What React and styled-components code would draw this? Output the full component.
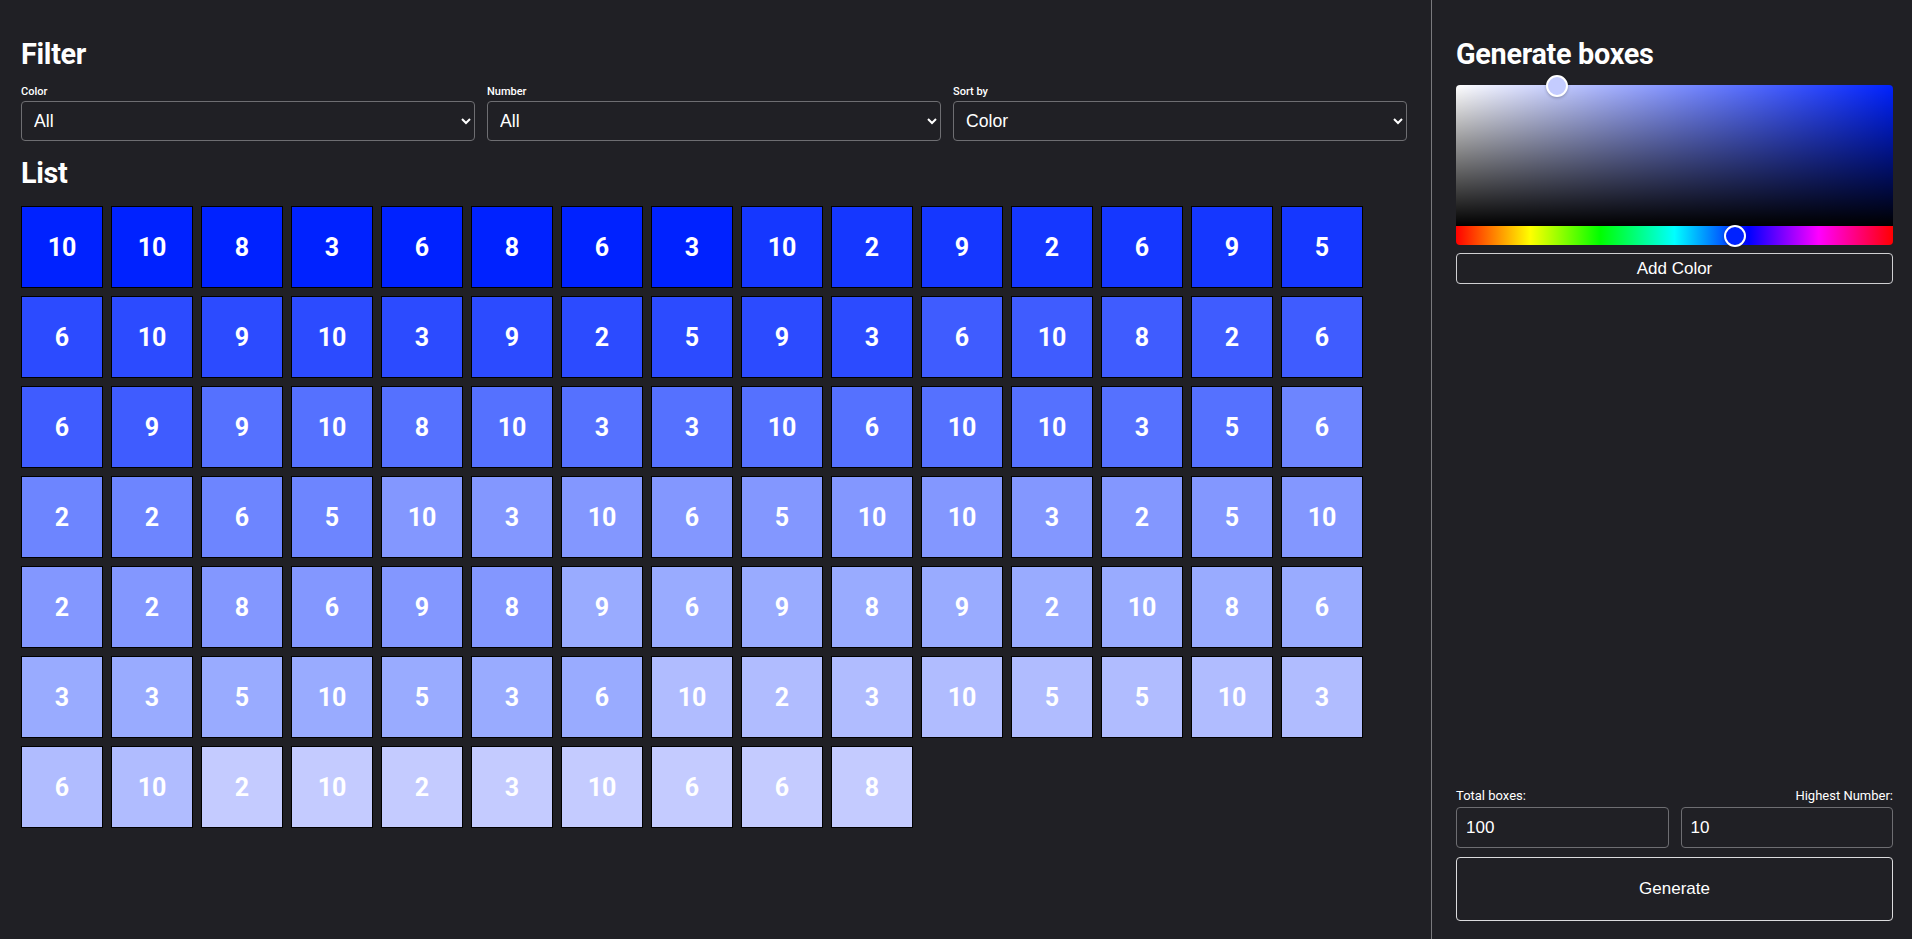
import React, { useState } from 'react';
import styled, { createGlobalStyle } from 'styled-components';

const GlobalStyle = createGlobalStyle`
  html, body {
    margin: 0;
    padding: 0;
    background: #202025;
    color: #ffffff;
    color-scheme: dark;
    font-family: Roboto, "Liberation Sans", Arial, sans-serif;
  }
  * { box-sizing: border-box; }
`;

const Page = styled.div`
  display: flex;
  height: 100vh;
  width: 100%;
  overflow: hidden;
`;

const MainPanel = styled.main`
  flex: 1;
  padding: 37px 24px 0 21px;
  border-right: 1px solid #7a7a7e;
`;

const SidePanel = styled.aside`
  width: 480px;
  flex-shrink: 0;
  display: flex;
  flex-direction: column;
  padding: 37px 19px 18px 24px;
`;

const Heading = styled.h2`
  margin: 0 0 ${p => p.$gap || 14}px;
  font-size: 28.8px;
  line-height: 34px;
  font-weight: 700;
  letter-spacing: -0.3px;
`;

const FilterRow = styled.div`
  display: grid;
  grid-template-columns: repeat(3, 1fr);
  gap: 12px;
  margin-bottom: 15px;
`;

const Field = styled.label`
  display: flex;
  flex-direction: column;
  gap: 3px;
`;

const SmallLabel = styled.span`
  font-size: 11px;
  line-height: 13px;
  font-weight: 500;
`;

const Select = styled.select`
  height: 40px;
  width: 100%;
  padding: 0 6px 0 8px;
  border: 1px solid #6e6e72;
  border-radius: 4px;
  background: #202025;
  color: #ffffff;
  font-family: "Liberation Sans", Arial, sans-serif;
  font-size: 17.6px;
  outline: none;
`;

const Grid = styled.div`
  display: flex;
  flex-wrap: wrap;
  gap: 8px;
  width: 1350px;
`;

const Box = styled.div`
  width: 82px;
  height: 82px;
  border: 1px solid #000;
  background: ${p => p.$color};
  display: flex;
  align-items: center;
  justify-content: center;
  font-size: 25px;
  font-weight: 700;
  color: #fff;
`;

const Picker = styled.div`
  display: flex;
  flex-direction: column;
  margin-bottom: 8px;
`;

const Saturation = styled.div`
  position: relative;
  height: 141px;
  border-radius: 4px 4px 0 0;
  background:
    linear-gradient(to top, #000, rgba(0, 0, 0, 0)),
    linear-gradient(to right, #fff, rgba(255, 255, 255, 0)),
    hsl(${p => p.$hue}, 100%, 50%);
`;

const Hue = styled.div`
  position: relative;
  height: 19px;
  border-radius: 0 0 4px 4px;
  background: linear-gradient(to right, #f00 0%, #ff0 17%, #0f0 33%, #0ff 50%, #00f 67%, #f0f 83%, #f00 100%);
`;

const Pointer = styled.div`
  position: absolute;
  width: 22px;
  height: 22px;
  margin: -11px 0 0 -11px;
  border-radius: 50%;
  border: 2px solid #fff;
  background: ${p => p.$color};
  box-shadow: 0 1px 3px rgba(0, 0, 0, 0.25);
`;

const OutlineButton = styled.button`
  width: 100%;
  height: ${p => p.$height}px;
  border: 1px solid ${p => p.$border || '#cfcfd2'};
  border-radius: 4px;
  background: transparent;
  color: #fff;
  font-family: "Liberation Sans", Arial, sans-serif;
  font-size: 17px;
  cursor: pointer;
`;

const Bottom = styled.div`
  margin-top: auto;
  display: flex;
  flex-direction: column;
`;

const LabelRow = styled.div`
  display: flex;
  justify-content: space-between;
  font-size: 13px;
  line-height: 15px;
  font-weight: 400;
  margin-bottom: 4px;
`;

const InputRow = styled.div`
  display: grid;
  grid-template-columns: 1fr 1fr;
  gap: 12px;
  margin-bottom: 9px;
`;

const NumberInput = styled.input`
  height: 41px;
  width: 100%;
  padding: 0 9px;
  border: 1px solid #6e6e72;
  border-radius: 4px;
  background: transparent;
  color: #fff;
  font-family: "Liberation Sans", Arial, sans-serif;
  font-size: 17px;
  outline: none;
`;

const shades = [
  ['#0022ff', 8], ['#1537ff', 7], ['#2c4bff', 10], ['#3f5cff', 7], ['#5571ff', 12],
  ['#6d85ff', 5], ['#8397ff', 17], ['#99abff', 16], ['#b0bcff', 10], ['#c4cbff', 8],
];

const numbers = [
  10, 10, 8, 3, 6, 8, 6, 3, 10, 2, 9, 2, 6, 9, 5,
  6, 10, 9, 10, 3, 9, 2, 5, 9, 3, 6, 10, 8, 2, 6,
  6, 9, 9, 10, 8, 10, 3, 3, 10, 6, 10, 10, 3, 5, 6,
  2, 2, 6, 5, 10, 3, 10, 6, 5, 10, 10, 3, 2, 5, 10,
  2, 2, 8, 6, 9, 8, 9, 6, 9, 8, 9, 2, 10, 8, 6,
  3, 3, 5, 10, 5, 3, 6, 10, 2, 3, 10, 5, 5, 10, 3,
  6, 10, 2, 10, 2, 3, 10, 6, 6, 8,
];

const colors = shades.flatMap(([c, n]) => Array(n).fill(c));
const initialBoxes = numbers.map((n, i) => ({ number: n, color: colors[i] }));

const App = () => {
  const [boxes] = useState(initialBoxes);
  const [total, setTotal] = useState('100');
  const [highest, setHighest] = useState('10');
  const hue = 232;

  return (
    <Page>
      <GlobalStyle />
      <MainPanel>
        <Heading>Filter</Heading>
        <FilterRow>
          <Field>
            <SmallLabel>Color</SmallLabel>
            <Select defaultValue="all">
              <option value="all">All</option>
            </Select>
          </Field>
          <Field>
            <SmallLabel>Number</SmallLabel>
            <Select defaultValue="all">
              <option value="all">All</option>
            </Select>
          </Field>
          <Field>
            <SmallLabel>Sort by</SmallLabel>
            <Select defaultValue="color">
              <option value="color">Color</option>
              <option value="number">Number</option>
            </Select>
          </Field>
        </FilterRow>
        <Heading $gap={16}>List</Heading>
        <Grid>
          {boxes.map((box, i) => (
            <Box key={i} $color={box.color}>{box.number}</Box>
          ))}
        </Grid>
      </MainPanel>

      <SidePanel>
        <Heading>Generate boxes</Heading>
        <Picker>
          <Saturation $hue={hue}>
            <Pointer $color="#c4ccff" style={{ left: '23%', top: '1px' }} />
          </Saturation>
          <Hue>
            <Pointer $color={`hsl(${hue}, 100%, 50%)`} style={{ left: `${(hue / 360) * 100 - 0.6}%`, top: '50%' }} />
          </Hue>
        </Picker>
        <OutlineButton $height={31}>Add Color</OutlineButton>

        <Bottom>
          <LabelRow>
            <span>Total boxes:</span>
            <span>Highest Number:</span>
          </LabelRow>
          <InputRow>
            <NumberInput value={total} onChange={e => setTotal(e.target.value)} />
            <NumberInput value={highest} onChange={e => setHighest(e.target.value)} />
          </InputRow>
          <OutlineButton $height={64} $border="#dcdcde">Generate</OutlineButton>
        </Bottom>
      </SidePanel>
    </Page>
  );
};

export default App;
